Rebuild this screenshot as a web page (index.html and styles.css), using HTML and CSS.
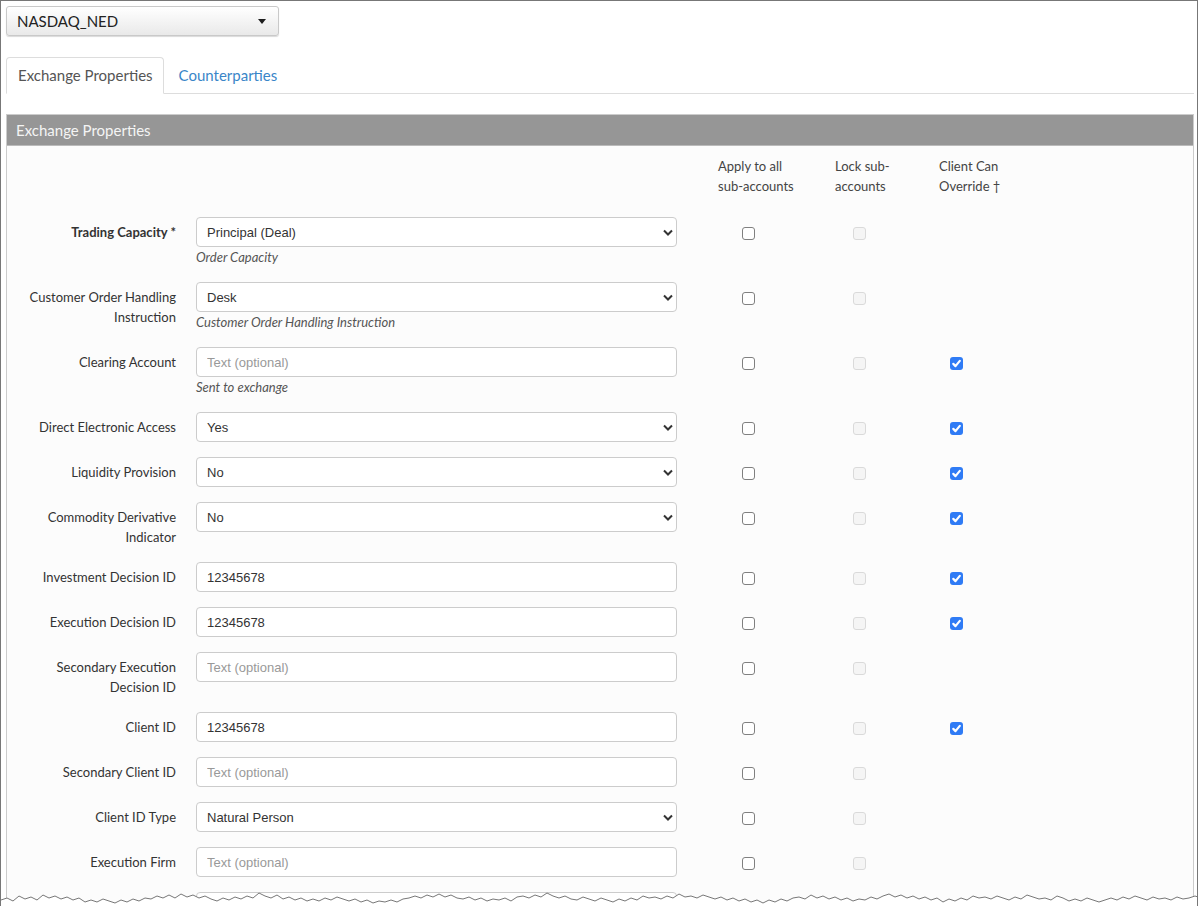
FILE: index.html
```html
<!DOCTYPE html>
<html lang="en">
<head>
    <meta charset="UTF-8">
    <meta name="viewport" content="width=device-width, initial-scale=1.0">
    <title>Exchange Properties</title>
    <link rel="stylesheet" href="styles.css">
</head>
<body>
    <div class="window">
        <div class="exchange-picker">
            <span>NASDAQ_NED</span>
            <svg class="caret" width="8" height="5" viewBox="0 0 8 5"><path d="M0 0h8L4 5z" fill="#1e1e1e"/></svg>
        </div>

        <ul class="tabs">
            <li class="tab active">Exchange Properties</li>
            <li class="tab"><a href="#">Counterparties</a></li>
        </ul>

        <div class="panel">
            <div class="panel-heading">Exchange Properties</div>
            <div class="panel-body">
                <div class="form-row head-row">
                    <div></div>
                    <div></div>
                    <div class="col-head apply">Apply to all sub-accounts</div>
                    <div class="col-head">Lock sub-accounts</div>
                    <div class="col-head">Client Can Override †</div>
                </div>

                <div class="form-row">
                    <label class="control-label strong">Trading Capacity *</label>
                    <div class="control">
                        <div class="form-control select">Principal (Deal)<svg class="chevron" width="10" height="7" viewBox="0 0 10 7"><path d="M1 1.5l4 4 4-4" fill="none" stroke="#333" stroke-width="2"/></svg></div>
                        <p class="help">Order Capacity</p>
                    </div>
                    <div class="cb-cell apply"><span class="cb"></span></div>
                    <div class="cb-cell lock"><span class="cb disabled"></span></div>
                    <div class="cb-cell override"></div>
                </div>

                <div class="form-row">
                    <label class="control-label">Customer Order Handling Instruction</label>
                    <div class="control">
                        <div class="form-control select">Desk<svg class="chevron" width="10" height="7" viewBox="0 0 10 7"><path d="M1 1.5l4 4 4-4" fill="none" stroke="#333" stroke-width="2"/></svg></div>
                        <p class="help">Customer Order Handling Instruction</p>
                    </div>
                    <div class="cb-cell apply"><span class="cb"></span></div>
                    <div class="cb-cell lock"><span class="cb disabled"></span></div>
                    <div class="cb-cell override"></div>
                </div>

                <div class="form-row">
                    <label class="control-label">Clearing Account</label>
                    <div class="control">
                        <input class="form-control" type="text" placeholder="Text (optional)">
                        <p class="help">Sent to exchange</p>
                    </div>
                    <div class="cb-cell apply"><span class="cb"></span></div>
                    <div class="cb-cell lock"><span class="cb disabled"></span></div>
                    <div class="cb-cell override"><span class="cb checked"><svg width="13" height="13" viewBox="0 0 13 13"><path d="M3.3 6.9l2.2 2.2 4.3-5.2" fill="none" stroke="#fff" stroke-width="2.2" stroke-linecap="round" stroke-linejoin="round"/></svg></span></div>
                </div>

                <div class="form-row">
                    <label class="control-label">Direct Electronic Access</label>
                    <div class="control">
                        <div class="form-control select">Yes<svg class="chevron" width="10" height="7" viewBox="0 0 10 7"><path d="M1 1.5l4 4 4-4" fill="none" stroke="#333" stroke-width="2"/></svg></div>
                    </div>
                    <div class="cb-cell apply"><span class="cb"></span></div>
                    <div class="cb-cell lock"><span class="cb disabled"></span></div>
                    <div class="cb-cell override"><span class="cb checked"><svg width="13" height="13" viewBox="0 0 13 13"><path d="M3.3 6.9l2.2 2.2 4.3-5.2" fill="none" stroke="#fff" stroke-width="2.2" stroke-linecap="round" stroke-linejoin="round"/></svg></span></div>
                </div>

                <div class="form-row">
                    <label class="control-label">Liquidity Provision</label>
                    <div class="control">
                        <div class="form-control select">No<svg class="chevron" width="10" height="7" viewBox="0 0 10 7"><path d="M1 1.5l4 4 4-4" fill="none" stroke="#333" stroke-width="2"/></svg></div>
                    </div>
                    <div class="cb-cell apply"><span class="cb"></span></div>
                    <div class="cb-cell lock"><span class="cb disabled"></span></div>
                    <div class="cb-cell override"><span class="cb checked"><svg width="13" height="13" viewBox="0 0 13 13"><path d="M3.3 6.9l2.2 2.2 4.3-5.2" fill="none" stroke="#fff" stroke-width="2.2" stroke-linecap="round" stroke-linejoin="round"/></svg></span></div>
                </div>

                <div class="form-row">
                    <label class="control-label">Commodity Derivative Indicator</label>
                    <div class="control">
                        <div class="form-control select">No<svg class="chevron" width="10" height="7" viewBox="0 0 10 7"><path d="M1 1.5l4 4 4-4" fill="none" stroke="#333" stroke-width="2"/></svg></div>
                    </div>
                    <div class="cb-cell apply"><span class="cb"></span></div>
                    <div class="cb-cell lock"><span class="cb disabled"></span></div>
                    <div class="cb-cell override"><span class="cb checked"><svg width="13" height="13" viewBox="0 0 13 13"><path d="M3.3 6.9l2.2 2.2 4.3-5.2" fill="none" stroke="#fff" stroke-width="2.2" stroke-linecap="round" stroke-linejoin="round"/></svg></span></div>
                </div>

                <div class="form-row">
                    <label class="control-label">Investment Decision ID</label>
                    <div class="control">
                        <input class="form-control" type="text" value="12345678">
                    </div>
                    <div class="cb-cell apply"><span class="cb"></span></div>
                    <div class="cb-cell lock"><span class="cb disabled"></span></div>
                    <div class="cb-cell override"><span class="cb checked"><svg width="13" height="13" viewBox="0 0 13 13"><path d="M3.3 6.9l2.2 2.2 4.3-5.2" fill="none" stroke="#fff" stroke-width="2.2" stroke-linecap="round" stroke-linejoin="round"/></svg></span></div>
                </div>

                <div class="form-row">
                    <label class="control-label">Execution Decision ID</label>
                    <div class="control">
                        <input class="form-control" type="text" value="12345678">
                    </div>
                    <div class="cb-cell apply"><span class="cb"></span></div>
                    <div class="cb-cell lock"><span class="cb disabled"></span></div>
                    <div class="cb-cell override"><span class="cb checked"><svg width="13" height="13" viewBox="0 0 13 13"><path d="M3.3 6.9l2.2 2.2 4.3-5.2" fill="none" stroke="#fff" stroke-width="2.2" stroke-linecap="round" stroke-linejoin="round"/></svg></span></div>
                </div>

                <div class="form-row">
                    <label class="control-label">Secondary Execution Decision ID</label>
                    <div class="control">
                        <input class="form-control" type="text" placeholder="Text (optional)">
                    </div>
                    <div class="cb-cell apply"><span class="cb"></span></div>
                    <div class="cb-cell lock"><span class="cb disabled"></span></div>
                    <div class="cb-cell override"></div>
                </div>

                <div class="form-row">
                    <label class="control-label">Client ID</label>
                    <div class="control">
                        <input class="form-control" type="text" value="12345678">
                    </div>
                    <div class="cb-cell apply"><span class="cb"></span></div>
                    <div class="cb-cell lock"><span class="cb disabled"></span></div>
                    <div class="cb-cell override"><span class="cb checked"><svg width="13" height="13" viewBox="0 0 13 13"><path d="M3.3 6.9l2.2 2.2 4.3-5.2" fill="none" stroke="#fff" stroke-width="2.2" stroke-linecap="round" stroke-linejoin="round"/></svg></span></div>
                </div>

                <div class="form-row">
                    <label class="control-label">Secondary Client ID</label>
                    <div class="control">
                        <input class="form-control" type="text" placeholder="Text (optional)">
                    </div>
                    <div class="cb-cell apply"><span class="cb"></span></div>
                    <div class="cb-cell lock"><span class="cb disabled"></span></div>
                    <div class="cb-cell override"></div>
                </div>

                <div class="form-row">
                    <label class="control-label">Client ID Type</label>
                    <div class="control">
                        <div class="form-control select">Natural Person<svg class="chevron" width="10" height="7" viewBox="0 0 10 7"><path d="M1 1.5l4 4 4-4" fill="none" stroke="#333" stroke-width="2"/></svg></div>
                    </div>
                    <div class="cb-cell apply"><span class="cb"></span></div>
                    <div class="cb-cell lock"><span class="cb disabled"></span></div>
                    <div class="cb-cell override"></div>
                </div>

                <div class="form-row">
                    <label class="control-label">Execution Firm</label>
                    <div class="control">
                        <input class="form-control" type="text" placeholder="Text (optional)">
                    </div>
                    <div class="cb-cell apply"><span class="cb"></span></div>
                    <div class="cb-cell lock"><span class="cb disabled"></span></div>
                    <div class="cb-cell override"></div>
                </div>

                <!-- row cut off by the torn edge -->
                <div class="form-row">
                    <label class="control-label"></label>
                    <div class="control">
                        <input class="form-control" type="text">
                    </div>
                    <div class="cb-cell apply"></div>
                    <div class="cb-cell lock"></div>
                    <div class="cb-cell override"></div>
                </div>
            </div>
        </div>

        <!-- torn paper edge at the bottom of the capture -->
        <svg class="torn-edge" width="1200" height="24" viewBox="0 0 1200 24">
            <polygon fill="#fff" points="0,14 6,12 12,15 18,10 24,13 30,11 36,14 42,9 48,12 54,10 60,13 66,11 72,14 78,12 84,16 90,14 96,16 102,13 108,15 114,17 120,14 126,16 132,13 138,15 144,12 150,13 156,10 162,12 168,9 174,12 180,8 186,11 192,9 198,12 204,10 210,13 216,15 222,12 228,14 234,11 240,13 246,10 252,12 258,7 264,10 270,12 276,9 282,13 288,11 294,14 300,12 306,15 312,13 318,15 324,12 330,14 336,11 342,13 348,15 354,13 360,16 366,14 372,17 378,15 384,16 390,14 396,16 402,13 408,12 414,10 420,12 426,9 432,11 438,8 444,11 450,9 456,12 462,13 468,11 474,14 480,12 486,15 492,13 498,14 504,12 510,15 516,11 522,10 528,12 534,9 540,11 546,7 552,10 558,12 564,10 570,13 576,14 582,11 588,13 594,15 600,12 606,14 612,16 618,13 624,15 630,12 636,14 642,10 648,12 654,11 660,13 666,10 672,12 678,8 684,11 690,10 696,12 702,9 708,11 714,13 720,11 726,14 732,12 738,15 744,13 750,16 756,14 762,17 768,14 774,16 780,13 786,15 792,12 798,11 804,13 810,9 816,12 822,10 828,13 834,11 840,14 846,12 852,15 858,13 864,14 870,11 876,13 882,10 888,8 894,11 900,9 906,12 912,10 918,13 924,11 930,14 936,12 942,16 948,13 954,15 960,12 966,14 972,10 978,12 984,11 990,13 996,10 1002,12 1008,14 1014,11 1020,13 1026,9 1032,11 1038,13 1044,12 1050,14 1056,10 1062,12 1068,15 1074,13 1080,15 1086,12 1092,14 1098,16 1104,14 1110,12 1116,14 1122,11 1128,13 1134,10 1140,12 1146,14 1152,11 1158,13 1164,12 1170,14 1176,11 1182,13 1188,12 1194,10 1200,12 1200,24 0,24"/>
            <polyline fill="none" stroke="#777" stroke-width="1" points="0,14 6,12 12,15 18,10 24,13 30,11 36,14 42,9 48,12 54,10 60,13 66,11 72,14 78,12 84,16 90,14 96,16 102,13 108,15 114,17 120,14 126,16 132,13 138,15 144,12 150,13 156,10 162,12 168,9 174,12 180,8 186,11 192,9 198,12 204,10 210,13 216,15 222,12 228,14 234,11 240,13 246,10 252,12 258,7 264,10 270,12 276,9 282,13 288,11 294,14 300,12 306,15 312,13 318,15 324,12 330,14 336,11 342,13 348,15 354,13 360,16 366,14 372,17 378,15 384,16 390,14 396,16 402,13 408,12 414,10 420,12 426,9 432,11 438,8 444,11 450,9 456,12 462,13 468,11 474,14 480,12 486,15 492,13 498,14 504,12 510,15 516,11 522,10 528,12 534,9 540,11 546,7 552,10 558,12 564,10 570,13 576,14 582,11 588,13 594,15 600,12 606,14 612,16 618,13 624,15 630,12 636,14 642,10 648,12 654,11 660,13 666,10 672,12 678,8 684,11 690,10 696,12 702,9 708,11 714,13 720,11 726,14 732,12 738,15 744,13 750,16 756,14 762,17 768,14 774,16 780,13 786,15 792,12 798,11 804,13 810,9 816,12 822,10 828,13 834,11 840,14 846,12 852,15 858,13 864,14 870,11 876,13 882,10 888,8 894,11 900,9 906,12 912,10 918,13 924,11 930,14 936,12 942,16 948,13 954,15 960,12 966,14 972,10 978,12 984,11 990,13 996,10 1002,12 1008,14 1014,11 1020,13 1026,9 1032,11 1038,13 1044,12 1050,14 1056,10 1062,12 1068,15 1074,13 1080,15 1086,12 1092,14 1098,16 1104,14 1110,12 1116,14 1122,11 1128,13 1134,10 1140,12 1146,14 1152,11 1158,13 1164,12 1170,14 1176,11 1182,13 1188,12 1194,10 1200,12"/>
        </svg>
    </div>
</body>
</html>
```

FILE: styles.css
```css
/* Base styles */
body {
    margin: 0;
    font-family: 'Lato', 'Open Sans', sans-serif;
    font-size: 13px;
    color: #333;
    background: #fff;
}

.window {
    position: relative;
    width: 1198px;
    height: 906px;
    box-sizing: border-box;
    border: 1px solid #777;
    border-bottom: none;
    padding: 5px 3px 0 5px;
    overflow: hidden;
}

/* Exchange picker */
.exchange-picker {
    width: 273px;
    height: 30px;
    box-sizing: border-box;
    display: flex;
    align-items: center;
    justify-content: space-between;
    padding: 0 12px 0 10px;
    border: 1px solid #c9c9c9;
    border-radius: 3px;
    background: linear-gradient(#ffffff, #e9e9e9);
    box-shadow: 0 1px 1px rgba(0, 0, 0, 0.15);
    font-size: 15px;
    color: #222;
}

/* Tabs */
.tabs {
    list-style: none;
    margin: 21px 0 0 0;
    padding: 0;
    display: flex;
    border-bottom: 1px solid #ddd;
    height: 36px;
}

.tab {
    height: 37px;
    box-sizing: border-box;
    padding: 0 10px 0 11px;
    margin-right: 3px;
    line-height: 35px;
    font-size: 15px;
    border: 1px solid transparent;
    border-radius: 4px 4px 0 0;
}

.tab.active {
    color: #555;
    background: #fff;
    border-color: #ddd #ddd transparent #ddd;
}

.tab a {
    color: #3a86c8;
    text-decoration: none;
}

/* Panel */
.panel {
    margin-top: 20px;
    border: 1px solid #ccc;
    border-bottom: none;
    background: #fcfcfc;
}

.panel-heading {
    height: 30px;
    line-height: 30px;
    padding-left: 9px;
    background: #969696;
    color: #f4f4f4;
    font-size: 15px;
    border-bottom: 1px solid #bbb;
}

.panel-body {
    padding-top: 10px;
}

/* Form grid */
.form-row {
    display: grid;
    grid-template-columns: 189px 481px 158px 104px 1fr;
    margin-bottom: 15px;
}

.head-row {
    margin-bottom: 21px;
}

.col-head {
    width: 82px;
    line-height: 20px;
    color: #444;
}

.col-head.apply {
    padding-left: 41px;
}

.control-label {
    padding: 5px 20px 0 10px;
    line-height: 20px;
    text-align: right;
}

.control-label.strong {
    font-weight: bold;
}

.form-control {
    display: block;
    width: 100%;
    height: 30px;
    box-sizing: border-box;
    margin: 0;
    padding: 0 10px;
    border: 1px solid #ccc;
    border-radius: 4px;
    background: #fff;
    font-family: 'Liberation Sans', Arial, sans-serif;
    font-size: 13px;
    color: #333;
    outline: none;
}

.form-control::placeholder {
    color: #999;
}

.select {
    display: flex;
    align-items: center;
    justify-content: space-between;
    padding-right: 3px;
}

.help {
    margin: 0;
    line-height: 20px;
    font-style: italic;
    color: #555;
}

/* Checkboxes */
.cb-cell {
    padding-top: 10px;
}

.cb-cell.apply {
    padding-left: 65px;
}

.cb-cell.lock {
    padding-left: 18px;
}

.cb-cell.override {
    padding-left: 11px;
}

.cb {
    display: block;
    width: 13px;
    height: 13px;
    box-sizing: border-box;
    border: 1.5px solid #808080;
    border-radius: 3px;
    background: #fff;
}

.cb.disabled {
    border: 1px solid #dadada;
    background: #f5f5f5;
}

.cb.checked {
    border: none;
    background: #2f7bf5;
}

.cb.checked svg {
    display: block;
}

.torn-edge {
    position: absolute;
    left: 0;
    bottom: -4px;
}
```
